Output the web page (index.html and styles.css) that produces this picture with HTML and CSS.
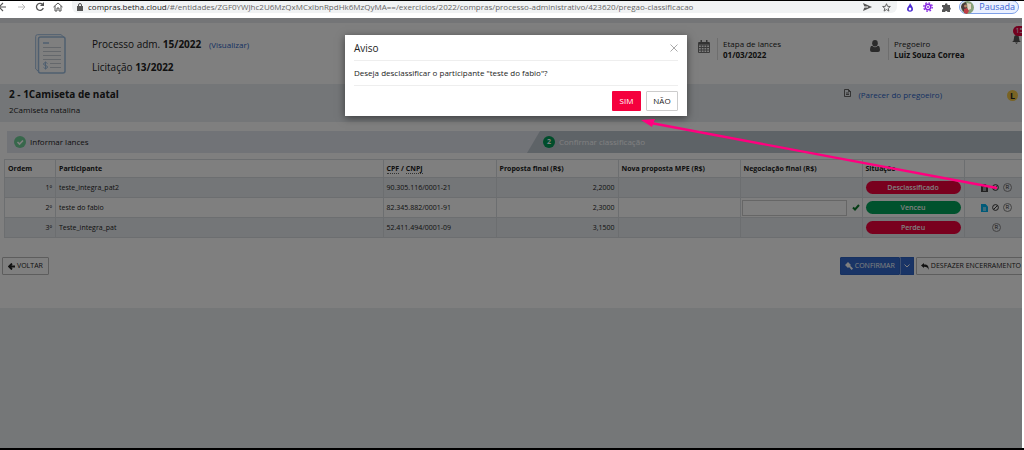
FILE: index.html
```html
<!DOCTYPE html>
<html lang="pt-BR">
<head>
<meta charset="utf-8">
<meta name="viewport" content="width=device-width, initial-scale=1">
<title>Classificação do pregão</title>
<link rel="stylesheet" href="styles.css">
</head>
<body>
<div class="browser">
  <button class="nav" aria-label="Voltar página"><svg width="10" height="10" viewBox="0 0 10 10"><path d="M7 5H0M4 1L0 5l4 4" fill="none" stroke="#555" stroke-width="1.2"/></svg></button>
  <button class="nav" aria-label="Avançar"><svg width="10" height="10" viewBox="0 0 10 10"><path d="M1 5h7M5 2l3 3-3 3" fill="none" stroke="#bbb"/></svg></button>
  <button class="nav" aria-label="Recarregar"><svg width="10" height="10" viewBox="0 0 10 10"><path d="M8.300 6A3.500 3.500 0 1 1 7.500 2.500" fill="none" stroke="#555" stroke-width="1.300"/><path d="M9 0v4H5z" fill="#555"/></svg></button>
  <button class="nav" aria-label="Início"><svg width="10" height="10" viewBox="0 0 10 10"><path d="M.5 5L5 1l4.500 4M2 4v5h2V6h2v3h2V4" fill="none" stroke="#555"/></svg></button>
  <div class="address">
    <svg width="6" height="8" viewBox="0 0 6 8"><path d="M0 3h6v5H0z" fill="#555"/><path d="M1.500 3V2a1.500 1.500 0 0 1 3 0v1" fill="none" stroke="#555"/></svg>
    <span class="url"><b>compras.betha.cloud</b>/#/entidades/ZGF0YWJhc2U6MzQxMCxlbnRpdHk6MzQyMA==/exercicios/2022/compras/processo-administrativo/423620/pregao-classificacao</span>
    <svg class="send" width="9" height="8" viewBox="0 0 9 8"><path d="M0 0l9 4-9 4 1.500-4z" fill="#555"/><path d="M1 4h4" stroke="#fff"/></svg>
    <svg width="9" height="9" viewBox="0 0 10 10"><path d="M5 .8l1.200 2.900 3.100.2-2.400 2 .8 3.100L5 7.300 2.300 9l.8-3.100-2.400-2 3.100-.2z" fill="none" stroke="#555"/></svg>
  </div>
  <div class="extensions">
    <svg width="8" height="9" viewBox="0 0 8 9"><path d="M4 0C4 2 1 4 1 6a3 2.700 0 0 0 6 0C7 4 5 2 4 0z" fill="#4a2bd0"/><ellipse cx="4" cy="6" rx="1.300" ry="1.500" fill="#fff"/></svg>
    <svg width="10" height="10" viewBox="0 0 10 10"><circle cx="5" cy="5" r="2.700" fill="none" stroke="#8a2be2" stroke-width="1.500"/><circle cx="5" cy="5" r="4.200" fill="none" stroke="#8a2be2" stroke-width="1.400" stroke-dasharray="1.650"/><circle cx="5" cy="5" r="1" fill="#8a2be2"/></svg>
    <svg width="9" height="9" viewBox="0 0 9 9"><path d="M0 2h3a1.300 1.300 0 1 1 2.500 0H8v2.500a1.200 1.200 0 0 1 0 2.300V9H5.500a1.300 1.300 0 0 0-2.500 0H0V6.500a1.200 1.200 0 0 0 0-2.400z" fill="#555"/></svg>
  </div>
  <button class="profile">
    <svg width="13" height="13" viewBox="0 0 13 13"><circle cx="6.500" cy="6.500" r="6.500" fill="#86a07b"/><path d="M1 3l4-2 1 5-1 6-3-2-2-4z" fill="#493c3c"/><path d="M6 2l4 1v5L7 9z" fill="#e3d4c4"/><path d="M3 8l3-1 2 3-2 3-3-1z" fill="#bd3d45"/><circle cx="4.500" cy="5" r="1.500" fill="#b98768"/></svg>
    Pausada
  </button>
</div>

<div class="app">
  <header class="summary">
    <div class="process">
      <svg width="31" height="40" viewBox="0 0 31 40" fill="none" stroke="#9fbfe0"><path d="M3 37L.7 35V2.500Q.7.700 2.500.700H26l3 2.500"/><rect x="3.500" y="3" width="26.500" height="36" rx="2" stroke-width="1.500"/><path d="M8 9h6" stroke-width="1.500"/><path d="M8 13.500h18M8 17.500h18M8 21.500h18M8 25.500h18M15 29.500h11M15 33.500h11" stroke="#c9cfd6"/><path d="M12.500 29.500c-1-1.500-4-1-4 .5 0 2 4 1 4 3 0 1.800-3 2-4 .3M10.500 27.500v8"/></svg>
      <div class="process-text">
        <p>Processo adm. <b>15/2022</b> <a href="#ver">(Visualizar)</a></p>
        <p>Licitação <b>13/2022</b></p>
      </div>
    </div>
    <div class="fact">
      <svg width="12" height="13" viewBox="0 0 12 13"><path d="M.5 2.500h11v10H.5zM.5 5h11M.5 7.500h11M.5 10h11M3.300 5v7.500M6 5v7.500M8.700 5v7.500" fill="none" stroke="#777"/><path d="M1 2h10v2.500H1zM2.500 0h1.500v3H2.500zM8 0h1.500v3H8z" fill="#666"/></svg>
      <div class="fact-text">Etapa de lances<b>01/03/2022</b></div>
    </div>
    <div class="fact">
      <svg width="10" height="12" viewBox="0 0 10 12"><ellipse cx="5" cy="3.200" rx="2.800" ry="3.200" fill="#555"/><path d="M1 6h1.500a3.500 3.500 0 0 0 5 0H9q1 1.500 1 4 0 2-2 2H2q-2 0-2-2 0-2.500 1-4z" fill="#555"/></svg>
      <div class="fact-text">Pregoeiro<b>Luiz Souza Correa</b></div>
    </div>
    <div class="bell"><svg width="9" height="10" viewBox="0 0 9 10"><path d="M0 8q2-1 2-4a2.500 3 0 0 1 5 0q0 3 2 4zM3 8.500h3L4.500 10z" fill="#555"/></svg><span class="count">15</span></div>
  </header>

  <section class="item">
    <div class="item-name"><h1>2 - 1Camiseta de natal</h1><p>2Camiseta natalina</p></div>
    <a class="opinion" href="#parecer"><svg width="7" height="8" viewBox="0 0 7 8"><path d="M.5.500h4l2 2v5h-6zM4.500.500v2h2M2 4h3M2 5.500h3" fill="none" stroke="#444" stroke-width=".8"/></svg>(Parecer do pregoeiro)</a>
    <span class="letter">L</span>
  </section>

  <ol class="steps">
    <li class="step"><svg width="12" height="12" viewBox="0 0 12 12"><circle cx="6" cy="6" r="6" fill="#6fcf97"/><path d="M3.500 6l2 2 3.500-3.500" fill="none" stroke="#fff" stroke-width="1.600"/></svg>Informar lances</li>
    <li class="step current"><span class="number">2</span>Confirmar classificação</li>
  </ol>

  <table class="bids">
    <colgroup><col class="c-order"><col><col class="c-doc"><col class="c-value"><col class="c-value"><col class="c-value"><col class="c-status"><col class="c-actions"></colgroup>
    <thead><tr><th>Ordem</th><th>Participante</th><th><abbr>CPF</abbr> / <abbr>CNPJ</abbr></th><th>Proposta final (R$)</th><th>Nova proposta MPE (R$)</th><th>Negociação final (R$)</th><th>Situação</th><th></th></tr></thead>
    <tbody>
      <tr><td class="num">1º</td><td>teste_integra_pat2</td><td>90.305.116/0001-21</td><td class="num">2,2000</td><td></td><td></td><td><span class="pill lost">Desclassificado</span></td>
        <td><div class="actions"><button aria-label="Documento"><svg width="7" height="8" viewBox="0 0 7 8"><path d="M0 0h4.500L7 2.500V8H0z" fill="#444"/><path d="M2 4h3M2 6h3" stroke="#fff"/></svg></button><button aria-label="Desclassificar"><svg width="7" height="7" viewBox="0 0 7 7"><circle cx="3.500" cy="3.500" r="2.900" fill="none" stroke="#333"/><path d="M1.500 5.500l4-4" stroke="#333"/></svg></button><button class="reg" aria-label="Registro">R</button></div></td></tr>
      <tr><td class="num">2º</td><td>teste do fabio</td><td>82.345.882/0001-91</td><td class="num">2,3000</td><td></td><td><div class="negotiation"><input type="text" aria-label="Negociação final"><button aria-label="Salvar"><svg width="8" height="7" viewBox="0 0 8 7"><path d="M1 3.500l2 2L7 1" fill="none" stroke="#0a7a2a" stroke-width="2"/></svg></button></div></td><td><span class="pill won">Venceu</span></td>
        <td><div class="actions"><button aria-label="Documento"><svg width="7" height="8" viewBox="0 0 7 8"><path d="M0 0h4.500L7 2.500V8H0z" fill="#00b4f0"/><path d="M2 4h3M2 6h3" stroke="#fff"/></svg></button><button aria-label="Desclassificar"><svg width="7" height="7" viewBox="0 0 7 7"><circle cx="3.500" cy="3.500" r="2.900" fill="none" stroke="#333"/><path d="M1.500 5.500l4-4" stroke="#333"/></svg></button><button class="reg" aria-label="Registro">R</button></div></td></tr>
      <tr><td class="num">3º</td><td>Teste_integra_pat</td><td>52.411.494/0001-09</td><td class="num">3,1500</td><td></td><td></td><td><span class="pill lost">Perdeu</span></td>
        <td><div class="actions"><button class="reg" aria-label="Registro">R</button></div></td></tr>
    </tbody>
  </table>

  <div class="toolbar">
    <button class="btn back"><svg width="7" height="7" viewBox="0 0 7 7"><path d="M7 3.500H1.500M4 .5l-3 3 3 3" fill="none" stroke="#222" stroke-width="1.800"/></svg>VOLTAR</button>
    <div class="toolbar-end">
      <div class="split"><button class="btn primary"><svg width="8" height="8" viewBox="0 0 8 8"><path d="M0 3l3-3 3 3-3 3zM4.500 3L8 6.500 6.700 8 3.500 4.500z" fill="#fff"/></svg>CONFIRMAR</button><button class="btn primary more" aria-label="Mais opções"><svg width="6" height="4" viewBox="0 0 6 4"><path d="M.5.500L3 3 5.500.500" fill="none" stroke="#fff"/></svg></button></div>
      <button class="btn"><svg width="8" height="7" viewBox="0 0 8 7"><path d="M0 2.500L3 0v1.500c4 0 5 2 4.500 5.500C7 4.500 6 3.800 3 3.800V5z" fill="#222"/></svg>DESFAZER ENCERRAMENTO</button>
    </div>
  </div>
  <div class="page-rest"></div>
  <div class="backdrop"></div>
  <div class="dialog" role="dialog" aria-labelledby="dialog-title">
    <div class="dialog-head"><h2 id="dialog-title">Aviso</h2><button class="close" aria-label="Fechar"><svg width="8" height="8" viewBox="0 0 8 8"><path d="M.5.500l7 7M7.500.500l-7 7" stroke="#aaa"/></svg></button></div>
    <p class="dialog-body">Deseja desclassificar o participante "teste do fabio"?</p>
    <div class="dialog-foot"><button class="yes">SIM</button><button class="no">NÃO</button></div>
  </div>
  <svg class="pointer" width="360" height="74" viewBox="0 0 360 74"><path d="M356 70L10 5" stroke="#ff007f" stroke-width="2.400" fill="none"/><path d="M0 2l14-1-3 8z" fill="#ff007f"/></svg>
</div>
</body>
</html>
```

FILE: styles.css
```css
* { box-sizing: border-box; }
body {
  margin: 0;
  min-height: 100vh;
  display: flex;
  flex-direction: column;
  border-top: 1px solid #000;
  border-bottom: 2px solid #000;
  font-family: "Open Sans", "Noto Sans", sans-serif;
  font-size: 7px;
  line-height: 10px;
  color: #222;
  background: #fff;
  overflow: hidden;
}
p, h1, h2, ol { margin: 0; padding: 0; }
button { font: inherit; color: inherit; padding: 0; border: 0; background: none; }
svg { display: block; flex: none; }
a { color: #2a62c4; text-decoration: none; }

.browser { height: 17px; display: flex; align-items: center; padding: 0 5px 5px 0; background: #fff; }
.nav { width: 18px; height: 11px; }
.nav svg { margin-left: -1px; }
.address {
  flex: 1;
  display: flex;
  align-items: center;
  height: 12px;
  padding: 0 6px 0 5px;
  gap: 10px;
  border-radius: 0 0 6px 6px;
  background: #f1f3f4;
  min-width: 0;
}
.url { flex: 1; margin-left: -5px; font-size: 8px; color: #666; white-space: nowrap; overflow: hidden; }
.url b { font-weight: 400; color: #222; }
.extensions { display: flex; align-items: center; gap: 9px; padding: 0 8px 0 9px; }
.profile {
  display: flex;
  align-items: center;
  gap: 5px;
  height: 14px;
  padding: 0 3px 0 1px;
  border: 1px solid #7ea0e8;
  border-radius: 7px;
  background: #eaf0fe;
  color: #3b68d8;
  font-size: 9px;
}

.app { flex: 1; position: relative; display: flex; flex-direction: column; margin-right: 2px; overflow: hidden; background: #fff; }
.summary {
  display: grid;
  grid-template-columns: 698fr 172fr 142fr 10fr;
  border-top: 5px solid #e8ebee;
  height: 66px;
  padding-top: 11px;
}
.process { display: flex; gap: 26px; padding-left: 35px; }
.process-text { margin-top: -1px; font-size: 10px; line-height: 22px; }
.process-text a { font-size: 8px; margin-left: 5px; }
.fact { display: flex; gap: 7px; padding-top: 6px; }
.fact-text {
  align-self: flex-start;
  display: flex;
  flex-direction: column;
  padding-left: 5px;
  border-left: 1px solid #ddd;
  font-size: 8px;
  line-height: 11px;
  white-space: nowrap;
  margin-top: -2px;
}
.fact:nth-child(3) { gap: 8px; }
.bell { position: relative; }
.bell .count {
  position: absolute;
  left: 1px;
  top: -8px;
  width: 13px;
  height: 10px;
  border-radius: 5px;
  background: #e6003c;
  color: #fff;
  text-align: center;
}

.item { display: flex; height: 38px; padding: 3px 4px 0 9px; background: #e9edf1; }
.item-name { flex: 1; font-size: 8px; line-height: 15px; }
.item h1 { font-size: 10px; line-height: 15px; }
.opinion { display: flex; gap: 7px; font-size: 8px; line-height: 16px; }
.opinion svg { margin-top: 2px; }
.letter {
  width: 11px;
  height: 11px;
  margin: 3px 0 0 65px;
  border-radius: 50%;
  background: #f2c749;
  font-size: 9px;
  line-height: 11px;
  font-weight: 700;
  text-align: center;
}

.steps { display: grid; grid-template-columns: 520fr 495fr; height: 22px; margin: 9px 0 6px 7px; list-style: none; background: #e3e6ee; font-size: 8px; }
.step { display: flex; align-items: center; gap: 4px; padding-left: 7px; }
.step.current { padding-left: 16px; color: #fff; background: #bcc6cf; clip-path: polygon(13px 0, 100% 0, 100% 100%, 0 100%); }
.number { width: 12px; height: 12px; border-radius: 50%; background: #009b56; color: #fff; font-size: 7px; line-height: 12px; font-weight: 700; text-align: center; }

.bids { table-layout: fixed; width: calc(100% - 4px); margin-left: 4px; border-collapse: collapse; }
.c-order { width: 51px; }
.c-doc { width: 113px; }
.c-value { width: 122px; }
.c-status { width: 102px; }
.c-actions { width: 58px; }
.bids th, .bids td { height: 20px; padding: 0 4px 0 3px; border: 1px solid #d9dde1; text-align: left; white-space: nowrap; }
.bids th { height: 18px; }
.bids th:last-child, .bids td:last-child { border-right: 0; padding-right: 3px; }
.bids tbody tr:nth-child(odd) { background: #e9edf1; }
.bids .num { text-align: right; padding-right: 3px; }
.bids abbr { border-bottom: 1px dotted #666; }
.pill { display: block; height: 13px; margin-right: -1px; border-radius: 7px; line-height: 13px; font-weight: 600; color: #fff; text-align: center; }
.lost { background: #f2003c; }
.won { background: #00a45a; }
.negotiation { display: flex; align-items: center; gap: 5px; margin: 0 -2px; }
.negotiation input { flex: 1; min-width: 0; height: 16px; border: 1px solid #ccc; background: #fff; }
.actions { display: flex; justify-content: center; align-items: center; gap: 4px; padding-left: 6px; }
.reg { width: 9px; height: 9px; border: 1px solid #888; border-radius: 50%; font-size: 6px; line-height: 7px; color: #333; }

.toolbar { display: flex; justify-content: space-between; padding: 19px 0 33px 2px; }
.toolbar-end { display: flex; gap: 2px; margin-right: -4px; }
.btn { display: flex; align-items: center; justify-content: center; gap: 2px; height: 18px; padding: 0 4px; border: 1px solid #bbb; border-radius: 1px; white-space: nowrap; font-size: 7px; }
.back { padding: 0 5px; }
.split { display: flex; }
.primary { border-color: #2e62c0; background: #3269cc; color: #fff; }
.more { width: 14px; padding: 0; border-left-color: #7fa3e3; }
.page-rest { flex: 1; background: #ebeef1; }

.backdrop { position: absolute; inset: 0; background: rgba(0, 0, 0, .5); }
.dialog {
  position: absolute;
  top: 17px;
  left: 345px;
  width: 342px;
  padding: 0 9px;
  background: #fff;
  box-shadow: 0 2px 8px rgba(0, 0, 0, .5);
}
.dialog-head { display: flex; align-items: center; justify-content: space-between; height: 26px; border-bottom: 1px solid #eee; }
.dialog h2 { font-size: 10px; font-weight: 400; }
.dialog-body { font-size: 8px; line-height: 24px; border-bottom: 1px solid #eee; }
.dialog-foot { display: flex; justify-content: flex-end; gap: 5px; padding: 5px 0; }
.dialog-foot button { height: 20px; font-size: 8px; border-radius: 1px; }
.yes { width: 29px; background: #f5003d; color: #fff; }
.no { width: 32px; border: 1px solid #ccc; }
.pointer { position: absolute; left: 641px; top: 100px; }
```
